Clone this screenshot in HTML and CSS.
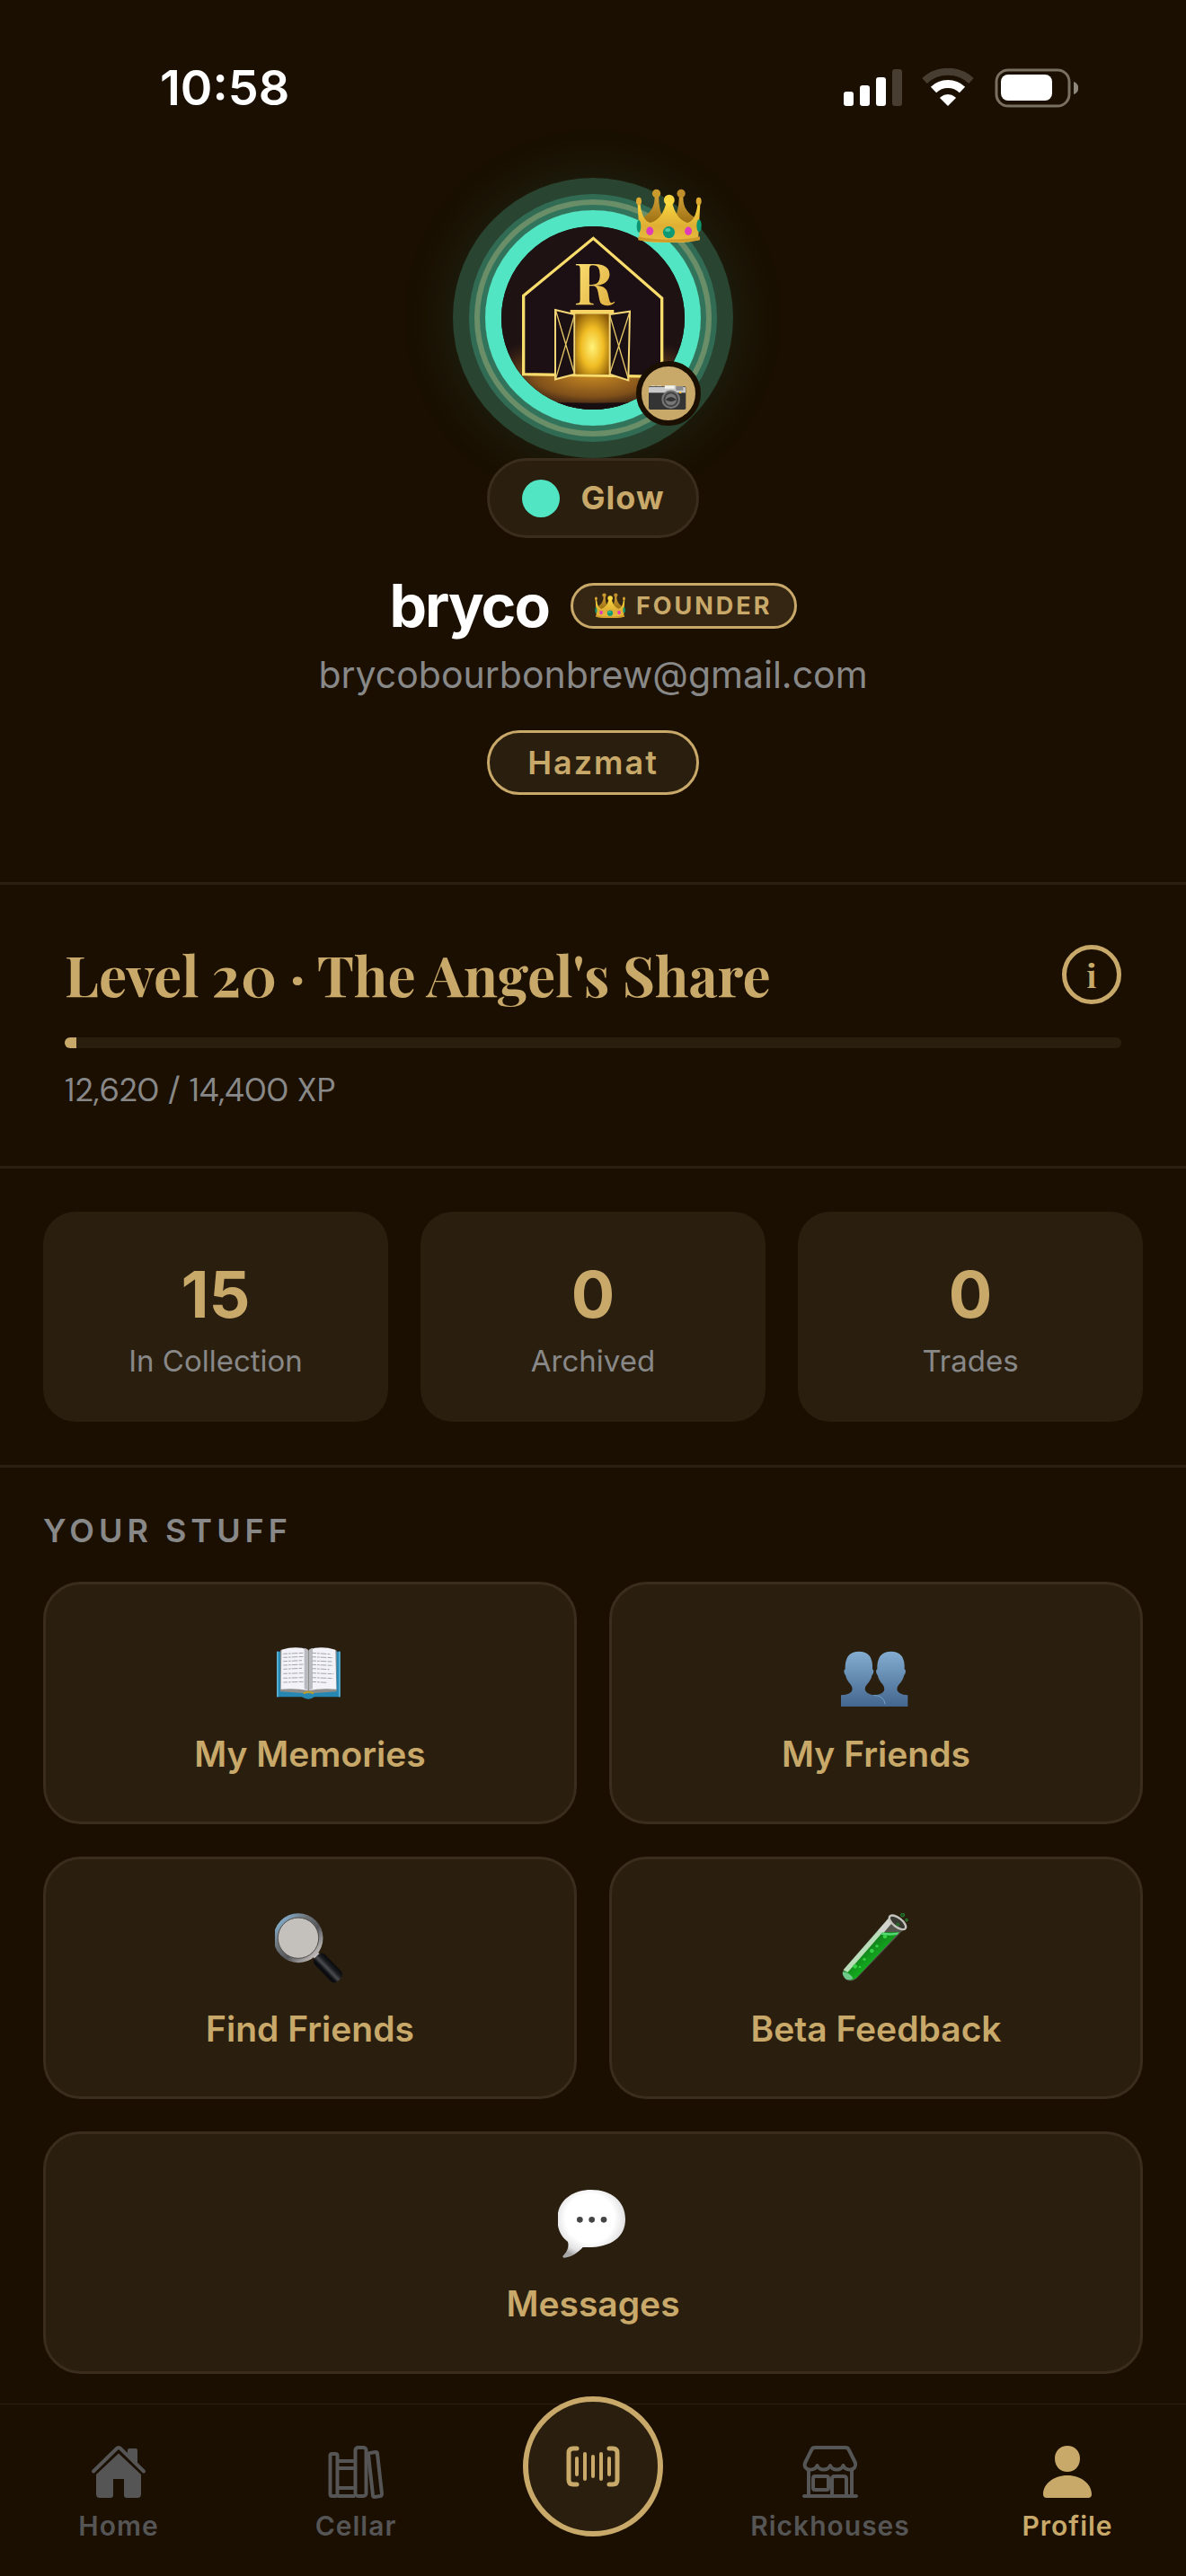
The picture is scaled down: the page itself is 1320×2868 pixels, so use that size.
FILE: index.html
```html
<!DOCTYPE html>
<html lang="en">
<head>
<meta charset="utf-8">
<meta name="viewport" content="width=device-width, initial-scale=1">
<title>Profile</title>
<link rel="stylesheet" href="styles.css">
</head>
<body>
<svg class="defs" width="0" height="0" aria-hidden="true">
  <defs>
    <linearGradient id="crownFront" x1="0" y1="0" x2="0" y2="1"><stop offset="0" stop-color="#fbd93f"/><stop offset=".6" stop-color="#dfae34"/><stop offset="1" stop-color="#e9be3f"/></linearGradient>
    <linearGradient id="crownBack" x1="0" y1="0" x2="0" y2="1"><stop offset="0" stop-color="#d0a036"/><stop offset="1" stop-color="#9a6d10"/></linearGradient>
    <symbol id="crown" viewBox="0 0 220 180">
      <path d="M62 24c2 34-12 58-44 76l10 20h84V60L88 92C78 70 76 44 76 24z" fill="url(#crownBack)"/>
      <path d="M158 24c-2 34 12 58 44 76l-10 20h-84V60l24 32c10-22 12-48 12-68z" fill="url(#crownBack)"/>
      <circle cx="68" cy="16" r="14" fill="#c99a2c"/><circle cx="151" cy="16" r="14" fill="#c08f2c"/>
      <path d="M5 52h9c4 36 16 58 34 62 28-6 46-34 54-72h18c8 38 26 66 52 72 18-4 30-26 34-62h9l-7 120c-50 14-146 14-196 0z" fill="url(#crownFront)"/>
      <ellipse cx="9" cy="42" rx="9" ry="13" fill="#dca832"/><ellipse cx="210" cy="42" rx="9" ry="13" fill="#dca832"/>
      <circle cx="111" cy="38" r="18" fill="#fbd840"/>
      <path d="M7 160c50 14 156 14 207 0v12c-50 10-157 10-207 0z" fill="#cf9a28"/>
      <ellipse cx="9" cy="126" rx="7" ry="21" fill="#0f9470"/><ellipse cx="211" cy="124" rx="8" ry="21" fill="#0f9470"/>
      <circle cx="110" cy="146" r="20" fill="#0f9a74"/><ellipse cx="106" cy="138" rx="9" ry="6" fill="#4cc9a0"/>
      <ellipse cx="46" cy="142" rx="12" ry="14" fill="#e03bb9"/><ellipse cx="175" cy="142" rx="12" ry="14" fill="#e03bb9"/>
    </symbol>
  </defs>
</svg>

<header class="status">
  <span class="status-time">10:58</span>
  <svg class="status-icons" viewBox="0 0 262 44" aria-hidden="true">
    <g fill="#fff">
      <rect x="1" y="26" width="11" height="16" rx="3"/><rect x="19" y="19" width="11" height="23" rx="3"/><rect x="37" y="10" width="11" height="32" rx="3"/>
      <rect x="55" y="1" width="11" height="41" rx="3" fill="#473d30"/>
      <path d="M109 32a12 12 0 0 1 16 0l1 1-9 9-9-9z"/>
    </g>
    <path d="M101 25a23 23 0 0 1 32 0" transform="translate(0 -1)" fill="none" stroke="#fff" stroke-width="9"/>
    <path d="M91 15a38 38 0 0 1 52 0" transform="translate(0 -1)" fill="none" stroke="#473d30" stroke-width="8"/>
    <rect x="171" y="2" width="81" height="40" rx="13" fill="none" stroke="#797062" stroke-width="3"/>
    <rect x="176" y="7" width="57" height="29" rx="8" fill="#fff"/>
    <path d="M257 15c7 2 7 12 0 14z" fill="#8d867b"/>
  </svg>
</header>

<main>
  <section class="hero">
    <div class="avatar-wrap">
      <div class="avatar">
        <svg viewBox="0 0 612 612" role="img" aria-label="Profile picture">
          <defs>
            <radialGradient id="floor" cx=".5" cy=".45" r=".5"><stop offset="0" stop-color="#c98a22"/><stop offset=".5" stop-color="#80501a"/><stop offset="1" stop-color="#1e1212" stop-opacity="0"/></radialGradient>
            <radialGradient id="doorGlow" cx=".5" cy=".55" r=".65"><stop offset="0" stop-color="#fff27a"/><stop offset=".5" stop-color="#f0bc24"/><stop offset="1" stop-color="#8a5a08"/></radialGradient>
            <linearGradient id="goldText" x1="0" y1="0" x2="1" y2="1"><stop offset="0" stop-color="#ffe97a"/><stop offset="1" stop-color="#dca83a"/></linearGradient>
          </defs>
          <rect width="612" height="612" fill="#1f1213"/>
          <ellipse cx="306" cy="510" rx="400" ry="150" fill="url(#floor)"/>
          <path d="M0 580q306 20 612 0v32H0z" fill="#170e12"/>
          <path d="M74 494V232L307 40l229 200v262z" fill="#1c1014"/>
          <path d="M74 494V232L307 40l229 200v262z" fill="none" stroke="#f8dc6c" stroke-width="10"/>
          <rect x="247" y="292" width="113" height="202" fill="url(#doorGlow)"/>
          <rect x="230" y="279" width="146" height="14" fill="#f6d566"/>
          <g fill="#1a0f12" stroke="#f4d878" stroke-width="6"><path d="M180 279l64 15v200l-64 17z"/><path d="M362 294l67-10-5 230-62-20z"/></g>
          <path d="M182 282l62 210M244 296l-62 212M362 296l62 214M428 288l-66 204" fill="none" stroke="#e6c768" stroke-width="4"/>
          <text x="309" y="261" class="avatar-letter" fill="url(#goldText)">R</text>
        </svg>
      </div>
      <svg class="avatar-crown" aria-hidden="true"><use href="#crown"/></svg>
      <button class="camera" type="button" aria-label="Change photo">
        <svg viewBox="0 0 180 180" aria-hidden="true">
          <path d="M32 64h14v8H32zM52 64h14v8H52z" fill="#ded8cc"/>
          <rect x="24" y="66" width="124" height="78" rx="5" fill="#343434"/>
          <path d="M24 88V72q0-4 5-4h47l4-5h34l5 5h24q4 0 4 4v16z" fill="#c9c9c9"/>
          <rect x="78" y="64" width="32" height="10" fill="#f5f3e8"/><rect x="115" y="66" width="24" height="14" fill="#8b8b8b"/>
          <circle cx="98" cy="110" r="31" fill="#777"/><circle cx="98" cy="110" r="25" fill="#424242"/><circle cx="98" cy="110" r="19" fill="#777"/>
          <path d="M80 111q18-18 36 0-18 12-36 0" fill="#333"/><rect x="126" y="84" width="7" height="6" fill="#fbc32b"/>
        </svg>
      </button>
    </div>
    <button class="glow" type="button"><span class="glow-dot"></span>Glow</button>
    <div class="name-row">
      <h1 class="name">bryco</h1>
      <span class="founder"><svg class="founder-crown" aria-hidden="true"><use href="#crown"/></svg>FOUNDER</span>
    </div>
    <p class="email">brycobourbonbrew@gmail.com</p>
    <span class="rank">Hazmat</span>
  </section>

  <section class="level">
    <div class="level-row">
      <h2 class="level-title">Level 20 · The Angel's Share</h2>
      <button class="info" type="button" aria-label="About levels">i</button>
    </div>
    <div class="bar"><div class="bar-fill" style="width: 1.1%"></div></div>
    <p class="xp">12,620 / 14,400 XP</p>
  </section>

  <section class="stats">
    <div class="stat"><strong class="stat-value">15</strong><span class="stat-label">In Collection</span></div>
    <div class="stat"><strong class="stat-value">0</strong><span class="stat-label">Archived</span></div>
    <div class="stat"><strong class="stat-value">0</strong><span class="stat-label">Trades</span></div>
  </section>

  <section class="stuff">
    <h2 class="stuff-title">YOUR STUFF</h2>
    <div class="tiles">
      <button class="tile" type="button">
        <svg class="tile-icon" viewBox="78 72 234 234" aria-hidden="true">
          <path d="M84 116h212v152h-86q-20 14-42 0H84z" fill="#2787b3"/><path d="M84 116h5v152h-5zM291 116h5v152h-5z" fill="#5fb4d6"/>
          <path d="M96 112h188v138l-86 6h-16l-86-6z" fill="#8d8d8b"/>
          <path d="M100 110q50-14 88 0v136q-40-8-90-4zM192 110q38-14 88 0l3 132q-52-4-91 4z" fill="#f2f2f8"/>
          <path d="M176 104q10 2 13 8v134q-8-4-13-5zM204 104q-10 2-12 8v134q8-4 12-5z" fill="#b9b9c0"/>
          <path d="M173 256q17-10 34 0" fill="none" stroke="#b9a128" stroke-width="6"/>
          <path d="M106 124l68-3M106 136l70-3M106 149l62-3M106 162l70-3M106 175l62-3M106 190l70-2M106 205l66-2M106 219l70-2M202 121l60 4M202 134l70 3M202 147l66 3M202 160l70 3M202 173l58 3M202 188l72 3M202 203l70 3M202 217l48 3" stroke="#a4a4ac" stroke-width="3" stroke-dasharray="14 3 8 3 20 4"/>
        </svg>
        My Memories
      </button>
      <button class="tile" type="button">
        <svg class="tile-icon" viewBox="78 42 234 234" aria-hidden="true">
          <defs><linearGradient id="bust" gradientUnits="userSpaceOnUse" x1="0" y1="86" x2="0" y2="270"><stop offset="0" stop-color="#83add0"/><stop offset="1" stop-color="#44668f"/></linearGradient></defs>
          <g fill="url(#bust)">
            <path d="M78 270V232Q116 230 116 212 116 204 110 196 96 180 94 167 88 160 88 152 88 147 92 145 90 86 138 86 186 86 183 145 187 147 187 152 187 160 181 167 179 180 165 196 158 204 158 212 160 230 194 232V270Z"/>
            <path d="M185 270V232Q223 230 223 212 223 204 217 196 203 180 201 167 195 160 195 152 195 147 199 145 197 86 245 86 293 86 290 145 294 147 294 152 294 160 288 167 286 180 272 196 265 204 265 212 267 230 301 232V270Z"/>
          </g>
          <path d="M188 232q34 2 37 30" fill="none" stroke="#6fa3cb" stroke-width="3"/>
        </svg>
        My Friends
      </button>
      <button class="tile" type="button">
        <svg class="tile-icon" viewBox="78 60 234 234" aria-hidden="true">
          <defs><linearGradient id="rim" x1="0" y1="0" x2="1" y2="1"><stop offset="0" stop-color="#8cc3ee"/><stop offset=".35" stop-color="#6d7478"/><stop offset=".6" stop-color="#55565a"/><stop offset="1" stop-color="#e8e2de"/></linearGradient>
          <linearGradient id="grip" x1="0" y1="0" x2="0" y2="1"><stop offset="0" stop-color="#08090b"/><stop offset=".3" stop-color="#1b1c20"/><stop offset=".55" stop-color="#4b4d51"/><stop offset=".8" stop-color="#0b0c0f"/></linearGradient></defs>
          <path d="M206 206l16-14 10 6-16 22z" fill="#cfcac8"/>
          <rect x="200" y="219" width="110" height="48" rx="17" transform="rotate(46 255 243)" fill="url(#grip)"/>
          <circle cx="156" cy="143" r="75" fill="#c4c0bb" stroke="url(#rim)" stroke-width="15"/>
          <circle cx="156" cy="143" r="68" fill="none" stroke="#55524f" stroke-width="3"/>
        </svg>
        Find Friends
      </button>
      <button class="tile" type="button">
        <svg class="tile-icon" viewBox="78 60 234 234" aria-hidden="true">
          <defs><linearGradient id="liquid" x1="0" y1="0" x2="1" y2="1"><stop offset=".35" stop-color="#127d1c"/><stop offset=".7" stop-color="#12c51d"/><stop offset="1" stop-color="#0c7512"/></linearGradient></defs>
          <path d="M240 72 88 246q-12 20 4 34 18 14 38-2l160-166z" fill="#55564c"/>
          <path d="M220 124h52L130 275q-20 16-36 2-14-14-2-30L206 122z" fill="url(#liquid)"/>
          <path d="M240 74l12 10L100 258l-14-8z" fill="#b9ddb9"/><path d="M240 74l14 12-34 40-18-8z" fill="#d5d3ce"/>
          <path d="M84 256q24 2 34 22-14 10-26 0-10-10-8-22" fill="#6fc98a"/>
          <ellipse cx="267" cy="91" rx="33" ry="15" transform="rotate(38 267 91)" fill="#393a31" stroke="#c4c3be" stroke-width="7"/>
          <path d="M216 124q28 6 56 0l-6 8q-28 4-54 0z" fill="#54d978"/>
          <g fill="#35d045"><circle cx="225" cy="138" r="7"/><circle cx="198" cy="170" r="5"/><circle cx="181" cy="186" r="7"/><circle cx="156" cy="214" r="5"/><circle cx="125" cy="238" r="7"/><circle cx="141" cy="240" r="4"/></g>
          <g fill="#19501d" stroke="#2a8731" stroke-width="3"><circle cx="284" cy="66" r="6"/><circle cx="297" cy="83" r="4"/><circle cx="268" cy="98" r="4"/></g>
        </svg>
        Beta Feedback
      </button>
      <button class="tile tile-wide" type="button">
        <svg class="tile-icon" viewBox="63 48 234 234" aria-hidden="true">
          <defs><radialGradient id="bubble" cx=".48" cy=".42" r=".6"><stop offset=".6" stop-color="#fff"/><stop offset=".85" stop-color="#e2e2e2"/><stop offset="1" stop-color="#a8a8a8"/></radialGradient></defs>
          <path d="M174 54c66 0 114 38 114 98 0 62-50 98-142 94-16 18-40 34-62 35-8-1-5-6 0-11 12-14 16-28 12-42-24-18-35-44-35-76 0-60 48-98 113-98z" fill="url(#bubble)"/>
          <g fill="#444"><circle cx="136" cy="154" r="10"/><circle cx="176" cy="154" r="10"/><circle cx="216" cy="154" r="10"/></g>
        </svg>
        Messages
      </button>
    </div>
  </section>
</main>

<nav class="tabs" aria-label="Main">
  <a class="tab" href="#home">
    <svg class="tab-icon" viewBox="0 0 64 60" aria-hidden="true"><path d="M4 29 32 4l28 25" fill="none" stroke="#1a0f01" stroke-width="11"/><path d="M42 10V6q0-2 2-2h7q2 0 2 2v16z" fill="currentColor"/><path d="M4 29.500 30 4q2-2 4 0l26 25.500" fill="none" stroke="currentColor" stroke-width="4" stroke-linecap="round"/><path d="M32 9.500 57 33v22q0 4-4 4H41q-3 0-3-3V38H26v18q0 3-3 3H11q-4 0-4-4V33z" fill="currentColor"/></svg>
    Home
  </a>
  <a class="tab" href="#cellar">
    <svg class="tab-icon" viewBox="0 0 64 60" fill="none" stroke="currentColor" stroke-width="4" aria-hidden="true"><rect x="3.500" y="10" width="8" height="47" rx="2"/><path d="M12 18h19M12 26h19M12 48h19M12 57h19"/><rect x="31.500" y="3" width="12" height="54" rx="3"/><path d="M46 11q0-2 2-2l6-1q2 0 2 2l5 44q0 3-2 3l-6 1q-2 0-2-2z"/></svg>
    Cellar
  </a>
  <button class="scan" type="button" aria-label="Scan barcode">
    <svg class="scan-icon" viewBox="0 0 60 46" fill="none" stroke="currentColor" stroke-width="5" stroke-linecap="round" aria-hidden="true"><path d="M12 3H8Q3 3 3 8v30q0 5 5 5h4M48 3h4q5 0 5 5v30q0 5-5 5h-4"/><path d="M12 14v18M21 9v28M30 12v22M39 9v28M48 14v18" stroke-width="4"/></svg>
  </button>
  <a class="tab" href="#rickhouses">
    <svg class="tab-icon" viewBox="0 0 64 60" fill="none" stroke="currentColor" stroke-width="4" stroke-linejoin="round" stroke-linecap="round" aria-hidden="true"><path d="M15 3h34q3 0 4 3l7 14c2 9-11 10-13.500 3-2.500 6-12 6-14.500 0-2.500 6-12 6-14.500 0C15 30 1 29 4 20l7-14q1-3 4-3z"/><path d="M8 28v28M56 28v28M3 57h58M34 56V38q0-3 3-3h10q3 0 3 3v18"/><rect x="13" y="35" width="17" height="15" rx="2"/></svg>
    Rickhouses
  </a>
  <a class="tab tab-active" href="#profile" aria-current="page">
    <svg class="tab-icon" viewBox="0 0 64 60" fill="currentColor" aria-hidden="true"><path d="M32 1c8 0 14 6 14 14 0 9-6 15-14 15s-14-6-14-15C18 7 24 1 32 1zM32 34c16 0 27 10 27 21q0 4-4 4H9q-4 0-4-4c0-11 11-21 27-21z"/></svg>
    Profile
  </a>
</nav>
</body>
</html>
```
FILE: styles.css
```css
:root {
  --bg: #1a0f01;
  --card: #2a1f0f;
  --line: #2a1f12;
  --edge: #3a2d1e;
  --gold: #c8a96a;
  --muted: #888;
  --teal: #52e5c4;
}

* { box-sizing: border-box; }

body {
  margin: 0;
  min-height: 100vh;
  display: flex;
  flex-direction: column;
  background: var(--bg);
  color: #fff;
  font-family: Inter, "Liberation Sans", sans-serif;
}

h1, h2, p { margin: 0; }
svg { display: block; }
button { font: inherit; color: inherit; padding: 0; cursor: pointer; }
.defs { position: absolute; }

/* Status bar */
.status {
  display: flex;
  justify-content: space-between;
  align-items: center;
  padding: 68px 120px 28px 178px;
}
.status-time { font-size: 54px; line-height: 60px; font-weight: 600; }
.status-icons { width: 262px; height: 44px; }

/* Hero */
.hero {
  display: flex;
  flex-direction: column;
  align-items: center;
  padding: 42px 48px 97px;
}
.avatar-wrap { position: relative; padding: 36px; }
.avatar {
  width: 240px;
  height: 240px;
  border: 18px solid var(--teal);
  border-radius: 50%;
  overflow: hidden;
  box-shadow:
    0 0 0 6px #32735c,
    0 0 0 12px #6a8e68,
    0 0 0 18px #326b54,
    0 0 0 36px #294431,
    0 0 66px 36px #52e5c41c;
}
.avatar svg { width: 100%; height: 100%; }
.avatar-letter { font: bold 192px "Playfair Display", "Liberation Serif", serif; text-anchor: middle; }
.avatar-crown { position: absolute; right: 35px; top: 12px; width: 73px; height: 60px; }
.camera {
  position: absolute;
  right: 36px;
  bottom: 36px;
  width: 72px;
  height: 72px;
  border: 6px solid var(--bg);
  border-radius: 50%;
  background: var(--gold);
}
.camera svg { width: 60px; height: 60px; }

.glow {
  position: relative;
  display: flex;
  align-items: center;
  gap: 24px;
  padding: 19px 36px;
  border: 3px solid var(--edge);
  border-radius: 45px;
  background: var(--card);
  color: var(--gold);
  font-size: 36px;
  line-height: 45px;
  font-weight: 700;
  letter-spacing: 1px;
}
.glow-dot { width: 42px; height: 42px; border-radius: 50%; background: var(--teal); }

.name-row { display: flex; align-items: center; gap: 24px; margin-top: 36px; }
.name { font-size: 66px; line-height: 78px; font-weight: 700; letter-spacing: -2px; }
.founder {
  display: flex;
  align-items: center;
  gap: 12px;
  padding: 6px 24px;
  border: 3px solid var(--gold);
  border-radius: 26px;
  background: #342613;
  color: var(--gold);
  font-size: 27px;
  line-height: 33px;
  font-weight: 700;
  letter-spacing: 3px;
}
.founder-crown { width: 34px; height: 28px; }
.email { margin-top: 11px; color: var(--muted); font-size: 41px; line-height: 54px; }
.rank {
  margin-top: 35px;
  padding: 9px 42px;
  border: 3px solid var(--gold);
  border-radius: 36px;
  background: var(--card);
  color: var(--gold);
  font-size: 36px;
  line-height: 48px;
  font-weight: 600;
  letter-spacing: 2px;
}

/* Level */
.level { padding: 67px 72px 60px; border-top: 3px solid var(--line); }
.level-row { display: flex; justify-content: space-between; align-items: center; }
.level-title {
  color: var(--gold);
  font-family: "Playfair Display", "Liberation Serif", serif;
  font-size: 62px;
  line-height: 66px;
  font-weight: 700;
}
.info {
  width: 66px;
  height: 66px;
  border: 5px solid var(--gold);
  border-radius: 50%;
  background: none;
  color: var(--gold);
  font-family: "Playfair Display", "Liberation Serif", serif;
  font-size: 36px;
  line-height: 48px;
  font-weight: 700;
}
.bar { height: 12px; margin-top: 37px; border-radius: 6px; background: var(--card); overflow: hidden; }
.bar-fill { height: 100%; background: var(--gold); }
.xp { margin-top: 23px; color: var(--muted); font-family: "DM Sans", Lato, "Liberation Sans", sans-serif; font-size: 36px; line-height: 48px; }

/* Stats */
.stats {
  display: grid;
  grid-template-columns: repeat(3, 1fr);
  gap: 36px;
  padding: 48px;
  border-top: 3px solid var(--line);
  border-bottom: 3px solid var(--line);
}
.stat {
  display: flex;
  flex-direction: column;
  align-items: center;
  gap: 9px;
  padding: 48px 12px 45px;
  border-radius: 36px;
  background: var(--card);
}
.stat-value { color: var(--gold); font-size: 72px; line-height: 87px; font-weight: 700; }
.stat-label { color: var(--muted); font-size: 33px; line-height: 45px; }

/* Shortcuts */
.stuff { padding: 46px 48px 33px; }
.stuff-title { color: var(--muted); font-size: 36px; line-height: 48px; font-weight: 600; letter-spacing: 5px; }
.tiles { display: grid; grid-template-columns: 1fr 1fr; gap: 36px; margin-top: 33px; }
.tile {
  display: flex;
  flex-direction: column;
  align-items: center;
  gap: 27px;
  padding: 60px 24px 51px;
  border: 3px solid var(--edge);
  border-radius: 42px;
  background: var(--card);
  color: var(--gold);
  font-size: 39px;
  line-height: 48px;
  font-weight: 600;
}
.tile-wide { grid-column: 1 / -1; }
.tile-icon { width: 78px; height: 78px; }

/* Tab bar */
.tabs {
  position: sticky;
  bottom: 0;
  display: grid;
  grid-template-columns: repeat(5, 1fr);
  justify-items: center;
  align-items: start;
  margin-top: auto;
  border-top: 1px solid var(--line);
  background: var(--bg);
}
.tab {
  display: flex;
  flex-direction: column;
  align-items: center;
  gap: 12px;
  padding: 45px 0 38px;
  color: #555;
  font-size: 30px;
  line-height: 36px;
  font-weight: 600;
  letter-spacing: 1px;
  text-decoration: none;
}
.tab-active { color: var(--gold); }
.tab-icon { width: 64px; height: 60px; }
.scan {
  display: grid;
  place-items: center;
  width: 156px;
  height: 156px;
  margin-top: -9px;
  border: 6px solid var(--gold);
  border-radius: 50%;
  background: var(--card);
  color: var(--gold);
}
.scan-icon { width: 60px; height: 46px; }
```
